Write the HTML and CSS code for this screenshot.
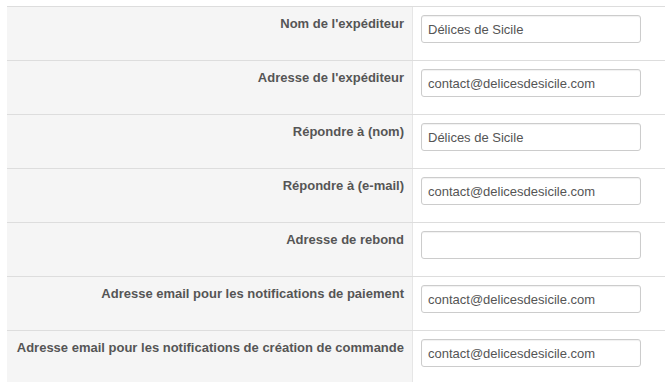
FILE: index.html
```html
<!DOCTYPE html>
<html lang="fr">
<head>
    <meta charset="UTF-8">
    <title>Paramètres e-mail</title>
    <link rel="stylesheet" href="styles.css">
</head>
<body>
    <div class="settings">
        <div class="row">
            <div class="label">Nom de l'expéditeur</div>
            <div class="field"><input type="text" value="Délices de Sicile"></div>
        </div>
        <div class="row">
            <div class="label">Adresse de l'expéditeur</div>
            <div class="field"><input type="text" value="contact@delicesdesicile.com"></div>
        </div>
        <div class="row">
            <div class="label">Répondre à (nom)</div>
            <div class="field"><input type="text" value="Délices de Sicile"></div>
        </div>
        <div class="row">
            <div class="label">Répondre à (e-mail)</div>
            <div class="field"><input type="text" value="contact@delicesdesicile.com"></div>
        </div>
        <div class="row">
            <div class="label">Adresse de rebond</div>
            <div class="field"><input type="text" value=""></div>
        </div>
        <div class="row">
            <div class="label">Adresse email pour les notifications de paiement</div>
            <div class="field"><input type="text" value="contact@delicesdesicile.com"></div>
        </div>
        <div class="row">
            <div class="label">Adresse email pour les notifications de création de commande</div>
            <div class="field"><input type="text" value="contact@delicesdesicile.com"></div>
        </div>
    </div>
</body>
</html>
```

FILE: styles.css
```css
body {
    margin: 0;
    padding: 6px 0 0 7px;
    font-family: "Liberation Sans", Arial, sans-serif;
    background: #fff;
    overflow: hidden;
}

.settings {
    width: 100%;
}

.row {
    display: grid;
    grid-template-columns: 406px 1fr;
    border-top: 1px solid #ddd;
    height: 53px;
}

.label {
    background: #f5f5f5;
    border-right: 1px solid #e6e6e6;
    padding: 8px 8px 0 0;
    text-align: right;
    font-size: 13px;
    line-height: 18px;
    font-weight: bold;
    color: #555;
    white-space: nowrap;
}

.field {
    padding: 8px 0 0 8px;
}

.field input {
    box-sizing: border-box;
    width: 220px;
    height: 28px;
    padding: 0 6px;
    border: 1px solid #ccc;
    border-radius: 3px;
    box-shadow: inset 0 1px 1px rgba(0, 0, 0, 0.06);
    font-family: "Liberation Sans", Arial, sans-serif;
    font-size: 13px;
    color: #555;
    background: #fff;
}
```
